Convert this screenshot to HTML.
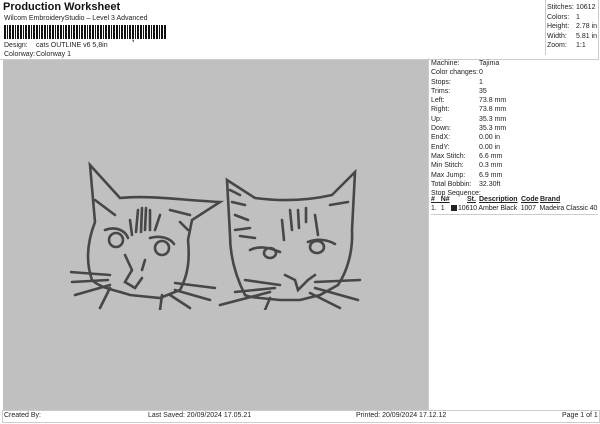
<!DOCTYPE html>
<html><head><style>
body{margin:0;width:600px;height:424px;background:#fff;position:relative;font-family:"Liberation Sans",sans-serif;color:#222;overflow:hidden}
.a{position:absolute;white-space:nowrap}
.s{font-size:7px}
</style></head><body>
<div class="a" style="left:0;top:0;width:598px;height:59px;border:1px solid #ccc;border-top:none;border-left:none"></div>
<div class="a" style="left:3px;top:1px;font-size:11px;font-weight:bold;color:#111">Production Worksheet</div>
<div class="a s" style="left:4px;top:15px">Wilcom EmbroideryStudio – Level 3 Advanced</div>
<div class="a" style="left:4px;top:25px;width:162px;height:14px;background:repeating-linear-gradient(90deg,#111 0 2px,#fff 2px 3px,#111 3px 4px,#fff 4px 5px,#111 5px 7px,#fff 7px 8px)"></div>
<div class="a" style="left:132px;top:34px;font-size:8px;font-weight:bold">,</div>
<div class="a s" style="left:4px;top:42px">Design:</div><div class="a s" style="left:36px;top:42px">cats OUTLINE v6 5,8in</div>
<div class="a s" style="left:4px;top:51px">Colorway:</div><div class="a s" style="left:36px;top:51px">Colorway 1</div>
<div class="a" style="left:545px;top:0;width:1px;height:55px;background:#ccc"></div>
<div class="a s" style="left:547px;top:3px;line-height:9.5px">Stitches:<br>Colors:<br>Height:<br>Width:<br>Zoom:</div>
<div class="a s" style="left:576px;top:3px;line-height:9.5px">10612<br>1<br>2.78 in<br>5.81 in<br>1:1</div>
<div class="a" style="left:3px;top:60px;width:425px;height:350px;background:#c0c0c0"></div>
<div class="a" style="left:428px;top:58px;width:1px;height:352px;background:#ccc"></div>
<div class="a s" style="left:431px;top:59px;line-height:9.3px">Machine:<br>Color changes:<br>Stops:<br>Trims:<br>Left:<br>Right:<br>Up:<br>Down:<br>EndX:<br>EndY:<br>Max Stitch:<br>Min Stitch:<br>Max Jump:<br>Total Bobbin:<br>Stop Sequence:</div>
<div class="a s" style="left:479px;top:59px;line-height:9.3px">Tajima<br>0<br>1<br>35<br>73.8 mm<br>73.8 mm<br>35.3 mm<br>35.3 mm<br>0.00 in<br>0.00 in<br>6.6 mm<br>0.3 mm<br>6.9 mm<br>32.30ft</div>
<div class="a s" style="left:431px;top:196px;font-weight:bold;text-decoration:underline">#&nbsp;&nbsp;&nbsp;N#</div>
<div class="a s" style="left:467px;top:196px;font-weight:bold;text-decoration:underline">St.</div>
<div class="a s" style="left:479px;top:196px;font-weight:bold;text-decoration:underline">Description</div>
<div class="a s" style="left:521px;top:196px;font-weight:bold;text-decoration:underline">Code</div>
<div class="a s" style="left:540px;top:196px;font-weight:bold;text-decoration:underline">Brand</div>
<div class="a s" style="left:431px;top:205px">1.&nbsp;&nbsp;1</div>
<div class="a" style="left:451px;top:205px;width:6px;height:6px;background:#222"></div>
<div class="a s" style="left:458px;top:205px;letter-spacing:-0.1px">10610 Amber Black&nbsp;&nbsp;1007&nbsp;&nbsp;Madeira Classic 40</div>
<div class="a" style="left:431px;top:214px;width:167px;height:1px;background:#ccc"></div>
<div class="a" style="left:2px;top:410px;width:596px;height:11px;border:1px solid #ccc"></div>
<div class="a s" style="left:4px;top:412px">Created By:</div>
<div class="a s" style="left:148px;top:412px">Last Saved: 20/09/2024 17.05.21</div>
<div class="a s" style="left:356px;top:412px">Printed: 20/09/2024 17.12.12</div>
<div class="a s" style="left:562px;top:412px">Page 1 of 1</div>
<svg class="a" style="left:70px;top:160px" width="300" height="150" viewBox="0 0 300 150" fill="none" stroke="#474747" stroke-width="2.6" stroke-linecap="round">
<path d="M22 120 C15 100 18 80 25 62 L20 5 L50 38 C80 35 110 40 150 42 L122 60 L118 80 C120 100 118 115 110 130 L90 138 L60 135 C45 130 30 128 22 120"/>
<path d="M25 40 L45 55 M100 50 L120 55 M110 62 L118 70"/>
<path d="M68 50 L66 72 M72 48 L71 72 M76 48 L75 70 M80 50 L80 70 M90 55 L85 70 M60 60 L62 75"/>
<circle cx="46" cy="80" r="7"/><circle cx="92" cy="88" r="7"/>
<path d="M35 70 C45 66 55 70 58 78 M80 78 C90 75 100 78 104 84 M55 95 L62 110 L55 122 L65 128 L72 118 M75 100 L72 110"/>
<path d="M0 112 L40 115 M2 122 L38 120 M5 135 L40 125 M105 123 L145 128 M105 130 L140 140 M100 135 L120 148 M40 128 L30 148 M92 135 L90 150"/>
<path d="M175 135 C165 115 160 95 160 75 L157 20 L185 38 C215 42 240 40 262 35 L285 12 L282 70 C283 90 278 110 268 125 L250 135 L230 140 L210 140 L190 138 C182 137 178 137 175 135"/>
<path d="M160 30 L170 35 M162 42 L175 45 M165 55 L178 60 M165 70 L180 68 M170 76 L185 78 M260 45 L278 42"/>
<path d="M220 50 L222 70 M228 50 L229 68 M236 48 L236 62 M212 60 L214 80 M245 55 L248 75"/>
<path d="M180 90 C190 85 200 88 210 92 M238 82 C248 78 258 80 265 84"/>
<ellipse cx="200" cy="93" rx="6" ry="5"/><ellipse cx="247" cy="87" rx="7" ry="6"/>
<path d="M215 115 L225 120 L228 130 L238 120 L245 115 M175 120 L210 125 M165 132 L205 128 M150 145 L200 132 M245 122 L290 120 M245 128 L288 140 M240 133 L270 148 M200 138 L195 150"/>
</svg>
</body></html>
